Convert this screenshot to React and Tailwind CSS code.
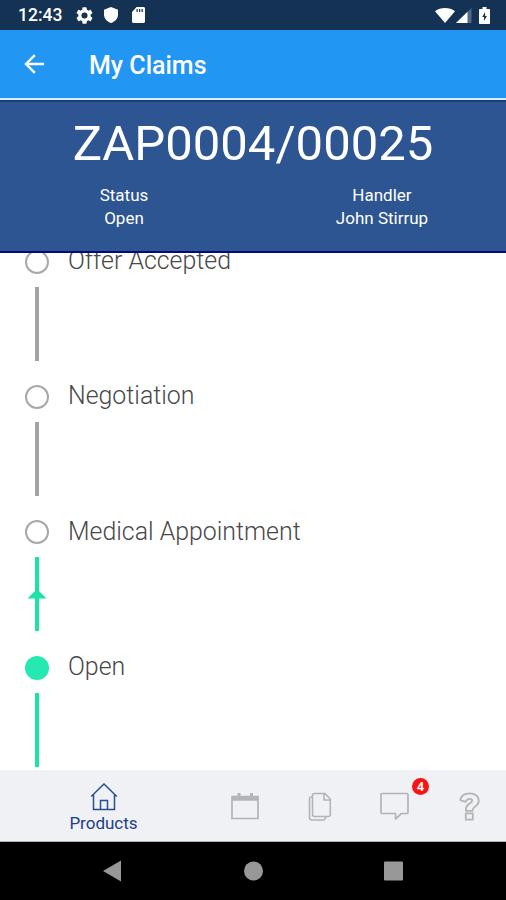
const steps = [
  { label: "Offer Accepted", line: "idle" },
  { label: "Negotiation", line: "idle" },
  { label: "Medical Appointment", line: "next" },
  { label: "Open", line: "done", active: true },
];

function StatusBar() {
  return (
    <div className="h-[30px] shrink-0 flex items-center bg-[#133254] text-white pl-[18px] pr-[16px]">
      <span className="text-[17.5px] leading-none font-medium w-[58px] pt-[2px]">12:43</span>
      <svg className="w-[17px] h-[17px]" viewBox="2 2 20 20" fill="currentColor">
        <path d="M19.14 12.94c.04-.3.06-.61.06-.94s-.02-.64-.07-.94l2.03-1.58a.49.49 0 0 0 .12-.61l-1.92-3.32a.49.49 0 0 0-.59-.22l-2.39.96a7 7 0 0 0-1.62-.94l-.36-2.54a.48.48 0 0 0-.48-.41h-3.84a.47.47 0 0 0-.47.41l-.36 2.54c-.59.24-1.13.57-1.62.94l-2.39-.96a.48.48 0 0 0-.59.22L2.74 8.87a.47.47 0 0 0 .12.61l2.03 1.58c-.05.3-.09.63-.09.94s.02.64.07.94l-2.03 1.58a.49.49 0 0 0-.12.61l1.92 3.32c.12.22.37.29.59.22l2.39-.96c.5.38 1.03.7 1.62.94l.36 2.54c.05.24.24.41.48.41h3.84c.24 0 .44-.17.47-.41l.36-2.54a7 7 0 0 0 1.62-.94l2.39.96c.22.08.47 0 .59-.22l1.92-3.32a.47.47 0 0 0-.12-.61zM12 15.6a3.6 3.6 0 1 1 0-7.2 3.6 3.6 0 0 1 0 7.2z" />
      </svg>
      <svg className="w-[14px] h-[16px] ml-[11px]" viewBox="0 0 14 17" fill="currentColor" preserveAspectRatio="none">
        <path d="M7 0 14 2.800V8c0 4-2.800 7.600-7 9-4.200-1.400-7-5-7-9V2.800z" />
      </svg>
      <svg className="w-[13px] h-[16px] ml-[14px]" viewBox="0 0 14 16" preserveAspectRatio="none">
        <path d="M5 0h7.500C13.300 0 14 .7 14 1.500v13c0 .8-.7 1.500-1.500 1.500h-11C.7 16 0 15.300 0 14.500V5z" fill="currentColor" />
        <path d="M5.500 2v3M8.200 2v3M10.900 2v3" stroke="#133254" strokeWidth="1.300" />
      </svg>
      <div className="ml-auto flex items-center">
        <svg className="w-[20px] h-[15px]" viewBox="0 0 20 15" fill="currentColor">
          <path d="M10 15 0 3.200C2.800 1 6.200 0 10 0s7.200 1 10 3.200z" />
        </svg>
        <svg className="w-[16px] h-[15px] ml-[1px]" viewBox="0 0 16 15">
          <path d="M0 15 15.500 0v15z" fill="#526b85" />
          <path d="M0 15 11.500 3.800V15z" fill="currentColor" />
        </svg>
        <svg className="w-[11px] h-[17px] ml-[7px]" viewBox="0 0 11 17">
          <path d="M3.500 0h4v2H10c.6 0 1 .4 1 1v13c0 .6-.4 1-1 1H1c-.6 0-1-.4-1-1V3c0-.6.4-1 1-1h2.500z" fill="currentColor" />
          <path d="M6.100 5 3.200 10h1.900v4L7.900 9H6.100z" fill="#133254" />
        </svg>
      </div>
    </div>
  );
}

function AppBar() {
  return (
    <div className="h-[70px] shrink-0 flex items-center bg-[#2196f3] border-b-2 border-[#d5ecff] text-white pl-[24px]">
      <svg className="w-[20px] h-[20px]" viewBox="0 0 20 20" fill="none" stroke="currentColor" strokeWidth="2.400">
        <path d="M20 10H2M10.800 1.200 2 10l8.800 8.800" />
      </svg>
      <h1 className="ml-[45px] pt-[2px] text-[25px] leading-none font-medium">My Claims</h1>
    </div>
  );
}

function ClaimHeader() {
  return (
    <div className="h-[153px] shrink-0 bg-[#2c5592] border-t-2 border-t-[#173f7d] border-b-2 border-b-[#08087e] text-white text-center">
      <div className="mt-[12px] h-[60px] text-[49px] leading-[60px]">ZAP0004/00025</div>
      <div className="mt-[10px] flex text-[17px] leading-[23px]">
        <div className="w-[248px]">
          <p>Status</p>
          <p>Open</p>
        </div>
        <div className="flex-1 pl-[10px]">
          <p>Handler</p>
          <p>John Stirrup</p>
        </div>
      </div>
    </div>
  );
}

function StepLine({ type }) {
  if (type === "idle") {
    return <div className="mt-[13px] w-[4px] h-[74px] bg-[#a3a3a3]" />;
  }
  return (
    <svg className="mt-[13px] w-[20px] h-[74px] text-[#19e3a6]" viewBox="0 0 20 74" fill="currentColor">
      <rect x="8" y="0" width="4" height="74" />
      {type === "next" && <path d="M10 32 19.500 41.500H.5z" />}
    </svg>
  );
}

function Timeline() {
  return (
    <div className="flex-1 min-h-0 overflow-hidden bg-white">
      <div className="-mt-[3.5px]">
        {steps.map((step) => (
          <div key={step.label} className="flex h-[135.4px]">
            <div className="ml-[25.4px] w-[24px] flex flex-col items-center">
              <div
                className={
                  step.active
                    ? "w-[24px] h-[24px] shrink-0 rounded-full bg-[#25e9b0]"
                    : "w-[24px] h-[24px] shrink-0 rounded-full border-2 border-[#a8a8a8]"
                }
              />
              <StepLine type={step.line} />
            </div>
            <p className="ml-[18.600px] -mt-[2.500px] text-[24.900px] leading-[28px] font-light text-[#484848]">
              {step.label}
            </p>
          </div>
        ))}
      </div>
    </div>
  );
}

function TabBar() {
  return (
    <div className="h-[72px] shrink-0 flex bg-[#f0f1f5] border-b border-[#b5b6b8] text-[#b4b4b6]">
      <div className="w-[207px] pt-[13px] flex flex-col items-center text-[#28508f]">
        <svg className="w-[28px] h-[28px]" viewBox="0 0 28 28" fill="none" stroke="currentColor" strokeWidth="1.500">
          <path d="M1.200 13.500 14 1l12.800 12.500M3.500 11.500V26.500h21V11.500" />
          <path d="M10.500 26.500v-9h7v9" />
        </svg>
        <span className="mt-[3px] text-[17px] leading-[19px] text-[#1d3f86]">Products</span>
      </div>
      <div className="w-[75px] pt-[22px] flex justify-center">
        <svg className="w-[28px] h-[28px]" viewBox="0 0 28 28" fill="none" stroke="currentColor">
          <path d="M1 4.500h26v22H1z" strokeWidth="1.700" />
          <path d="M1 6.500h26" strokeWidth="4.500" />
          <path d="M8 1v6M20.500 1v6" strokeWidth="3" />
        </svg>
      </div>
      <div className="w-[75px] pt-[22px] flex justify-center">
        <svg className="w-[24px] h-[29px]" viewBox="0 0 24 29" fill="none" stroke="currentColor" strokeWidth="1.600">
          <path d="M4.500 5H3.200C2 5 1.500 5.700 1.500 7v18.500C1.500 27 2.300 28 3.800 28H15c1.500 0 2.500-.7 2.800-3.500" />
          <path d="M6.500 1.500H17l5.300 5.500v15.500c0 1.300-.7 2-2 2H6.500c-1.300 0-2-.7-2-2v-19c0-1.300.7-2 2-2z" />
          <path d="M16 1.500V8h6.300" />
        </svg>
      </div>
      <div className="w-[75px] pt-[22px] flex justify-center">
        <div className="relative">
          <svg className="w-[29px] h-[29px]" viewBox="0 0 29 29" fill="none" stroke="currentColor" strokeWidth="1.700" strokeLinejoin="round">
            <path d="M2 1.500h25c.5 0 1 .5 1 1v18c0 .5-.5 1-1 1h-5.500L15.500 27v-5.500H2c-.5 0-1-.5-1-1v-18c0-.5.500-1 1-1z" />
          </svg>
          <span className="absolute left-[32px] -top-[14px] w-[17px] h-[17px] rounded-full bg-[#fb1313] text-white text-[13px] leading-[18px] font-bold text-center">
            4
          </span>
        </div>
      </div>
      <div className="flex-1 pt-[22px] flex justify-center">
        <svg className="w-[21px] h-[29px]" viewBox="0 0 21 29" fill="none" stroke="currentColor" strokeWidth="1.800" strokeLinejoin="round">
          <path d="M1.200 8C2.200 3.800 5.500 1.300 10.500 1.300c5.500 0 9.300 3 9.300 7.200 0 3-1.800 4.900-4.300 6.400-1.700 1-2 1.600-2 3.900H6.800c0-4 .9-5.700 3.800-7.400 1.600-1 2.500-1.500 2.500-2.700 0-1.200-1-1.900-2.600-1.900-1.900 0-3 1-4.200 3.100z" />
          <path d="M6.800 21.300h7v6.400h-7z" />
        </svg>
      </div>
    </div>
  );
}

function SystemNav() {
  return (
    <div className="h-[58px] shrink-0 flex bg-black text-[#989898] pl-[103px]">
      <svg className="w-[300px] h-[58px]" viewBox="0 0 300 58" fill="currentColor">
        <path d="M0 29 18 18.500v21z" />
        <circle cx="150.500" cy="29" r="9.500" />
        <rect x="281" y="19.500" width="19" height="19" rx="1" />
      </svg>
    </div>
  );
}

export default function App() {
  return (
    <div className="w-[506px] h-[900px] flex flex-col overflow-hidden bg-white font-['Roboto',sans-serif]">
      <StatusBar />
      <AppBar />
      <ClaimHeader />
      <Timeline />
      <TabBar />
      <SystemNav />
    </div>
  );
}
